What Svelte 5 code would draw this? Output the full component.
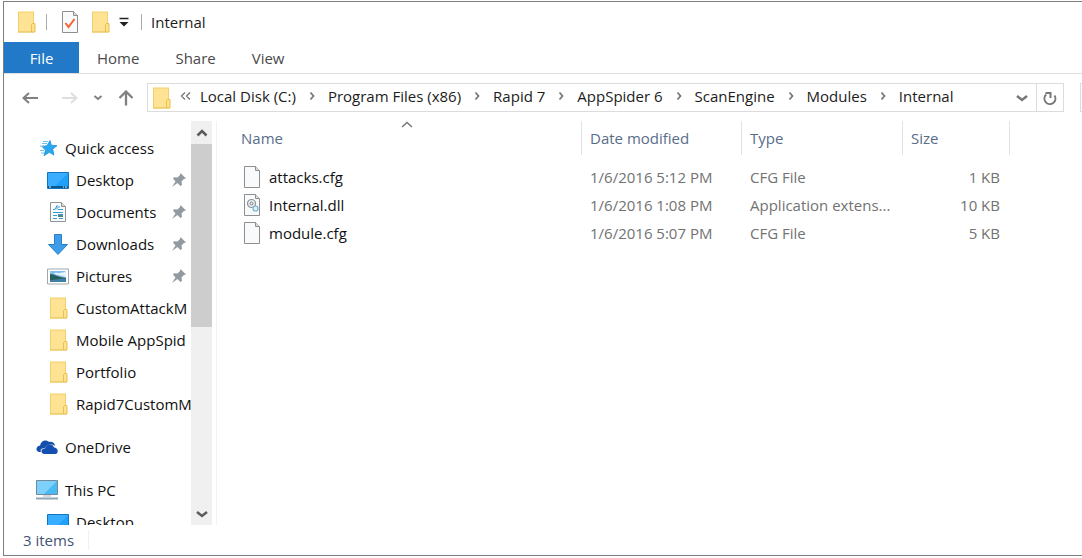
<script>
  const crumbs = ['Local Disk (C:)', 'Program Files (x86)', 'Rapid 7', 'AppSpider 6', 'ScanEngine', 'Modules', 'Internal'];

  const places = [
    { name: 'Quick access', icon: 'star', root: true },
    { name: 'Desktop', icon: 'desktop', pinned: true },
    { name: 'Documents', icon: 'document', pinned: true },
    { name: 'Downloads', icon: 'download', pinned: true },
    { name: 'Pictures', icon: 'picture', pinned: true },
    { name: 'CustomAttackM', icon: 'folder' },
    { name: 'Mobile AppSpid', icon: 'folder' },
    { name: 'Portfolio', icon: 'folder' },
    { name: 'Rapid7CustomM', icon: 'folder' },
    { name: 'OneDrive', icon: 'cloud', root: true },
    { name: 'This PC', icon: 'computer', root: true },
    { name: 'Desktop', icon: 'desktop' }
  ];

  const files = [
    { name: 'attacks.cfg', date: '1/6/2016 5:12 PM', type: 'CFG File', size: '1 KB', icon: 'file' },
    { name: 'Internal.dll', date: '1/6/2016 1:08 PM', type: 'Application extens...', size: '10 KB', icon: 'library' },
    { name: 'module.cfg', date: '1/6/2016 5:07 PM', type: 'CFG File', size: '5 KB', icon: 'file' }
  ];
</script>

{#snippet icon(kind)}
  <svg class="icon" viewBox="0 0 22 22" aria-hidden="true">
    {#if kind === 'folder'}
      <path d="M3 .5h16v21H3z" fill="#f2cf68" />
      <path d="M4 1.500h14v19H4z" fill="#ffe394" />
      <path d="M16.500 21v-7.500l1-1h2.500v8.500z" fill="#ffe28a" stroke="#e9bf4f" />
      <path d="M3 21h13" stroke="#e9c75e" />
    {:else if kind === 'star'}
      <path d="M14 3.500l1.300 4.700 5.700.4-4.300 3.600 1.200 5.800-4.600-2.700-5.300 3.400 1.500-5.700-3.500-3.500 5-.8z" fill="#2ba6ef" stroke="#1b8fd4" stroke-width=".8" />
      <path d="M7 4.500h5M6 6.500h5M4 9h4M4 13.500h4M5 16h3" stroke="#71c2ee" />
    {:else if kind === 'desktop'}
      <path d="M.5 3.500h21v16H.5z" fill="#1fa1fa" stroke="#1276bd" />
      <path d="M1 4h20L8 17H1z" fill="#39adff" />
      <path d="M1 17h20v2H1z" fill="#075b92" />
      <path d="M2 18h2M16 18h1M18 18h2" stroke="#d4efff" />
    {:else if kind === 'document'}
      <path d="M3.500 1.500h11l4 4v15h-15z" fill="#fafbfb" stroke="#909497" />
      <path d="M14.500 1.500v4h4" fill="#ddd" stroke="#909497" />
      <path d="M6 8.500h2l2-4v4M11 6h2M11 8.500h5M6 11.500h10M6 14.500h4M6 17.500h4M12 17.500h4" fill="none" stroke="#389bd2" />
      <path d="M11 13h5v3h-5z" fill="#498fb4" />
      <path d="M11 16l2-2 3 2z" fill="#4a9058" />
    {:else if kind === 'download'}
      <path d="M7.500 1.500h7v10h6L11 21.500 1.500 11.500h6z" fill="#3e9ce8" stroke="#2681c9" />
    {:else if kind === 'picture'}
      <path d="M.5 4h21v15H.5z" fill="#fff" stroke="#a4a7a9" />
      <path d="M3 6h16v11H3z" fill="#83bdec" />
      <path d="M7 9c2-3 4 0 6-1s4 0 6-2v6z" fill="#e7f5fc" />
      <path d="M3 9c5 0 7 3 16 4v4H3z" fill="#285f5b" />
      <path d="M3 15c6 0 9-2 16-1v3H3z" fill="#3d80aa" />
    {:else if kind === 'cloud'}
      <path d="M3 16c-4-1-3-6 1-6.500C5 4.500 10 3 13 6c3-1 6 1 6 4-4-3-9-1-10 2-4 0-5 2-4 4z" fill="#154fa9" />
      <path d="M8 18c-4-1-3-6 1-5.500 1-5 8-5 9-1 4.500 0 5 6.500 1 6.500z" fill="#1450b2" />
    {:else if kind === 'computer'}
      <path d="M.5 1.500h21v14H.5z" fill="#4abaf4" stroke="#70899b" />
      <path d="M1 2h20L8 15H1z" fill="#7dd0fa" />
      <path d="M7 16h8v2H7z" fill="#d3dbe0" />
      <path d="M0 19.500h22" stroke="#8fa5b3" stroke-width="2" />
    {:else}
      <path d="M3.500.5h11l4 4v17h-15z" fill="#f9fafb" stroke="#8d8f90" />
      <path d="M14.500.5v4h4" fill="#dedede" stroke="#8d8f90" />
      {#if kind === 'library'}
        <circle cx="10.500" cy="9.500" r="4" fill="#f1f3f4" stroke="#8b9298" stroke-width="1.200" />
        <circle cx="10.500" cy="9.500" r="1.500" fill="none" stroke="#737b80" />
        <circle cx="14.500" cy="14.500" r="2.500" fill="#d9effa" stroke="#7aafd0" stroke-width="1.200" />
      {:else if kind === 'properties'}
        <path d="M6.500 12l3 4 6-8" fill="none" stroke="#f16535" stroke-width="2" />
      {/if}
    {/if}
  </svg>
{/snippet}

{#snippet glyph(kind)}
  <svg class="glyph" viewBox="0 0 16 16" aria-hidden="true">
    {#if kind === 'back'}
      <path d="M16 8H1M7 3L1.500 8l5.500 5" stroke-width="2" />
    {:else if kind === 'forward'}
      <path d="M0 8h15M9 3l5.500 5L9 13" stroke-width="2" />
    {:else if kind === 'up'}
      <path d="M8 15.500V2M1.500 8L8 1.500 14.500 8" stroke-width="2.300" />
    {:else if kind === 'recent'}
      <path d="M4.500 6L8 9l3.500-3" stroke-width="2" />
    {:else if kind === 'down'}
      <path d="M3 6l5 4 5-4" stroke-width="2.500" />
    {:else if kind === 'scrollup'}
      <path d="M3.500 10.500L8 6l4.500 4.500" stroke-width="2.500" />
    {:else if kind === 'sort'}
      <path d="M3 10l5-4.500 5 4.500" stroke-width="1.500" />
    {:else if kind === 'right'}
      <path d="M6.500 4.500L9.500 8l-3 3.500" stroke-width="1.800" />
    {:else if kind === 'more'}
      <path d="M7 4.500L3.500 8 7 11.500M12 4.500L8.500 8l3.500 3.500" stroke-width="1.300" />
    {:else if kind === 'refresh'}
      <path d="M4.200 4.500a5.500 5.500 0 1 0 8.300 1" stroke-width="2" />
      <path d="M3.500 3h5v5" stroke-width="2" />
    {:else if kind === 'customize'}
      <path d="M3.500 4.500h9" stroke-width="1.500" />
      <path d="M3.500 8h9L8 12.500z" fill="currentColor" stroke="none" />
    {:else if kind === 'pin'}
      <path d="M9.500 1L15 6.500l-2 .5-2.500 2.500.5 3.500-1.500 1-3-3L1 15l3.500-5.500-2.500-3 1-1.200 3.500.2L9 3z" fill="currentColor" stroke="none" />
    {/if}
  </svg>
{/snippet}

<main class="window">
  <header class="titlebar">
    {@render icon('folder')}
    <span class="divider"></span>
    <button class="quick" aria-label="Properties">{@render icon('properties')}</button>
    <button class="quick" aria-label="New folder">{@render icon('folder')}</button>
    <button class="customize" aria-label="Customize toolbar">{@render glyph('customize')}</button>
    <span class="divider"></span>
    <h1>Internal</h1>
  </header>

  <nav class="ribbon" aria-label="Ribbon">
    <button class="file">File</button>
    <button>Home</button>
    <button>Share</button>
    <button>View</button>
  </nav>

  <div class="location">
    <div class="history">
      <button aria-label="Back">{@render glyph('back')}</button>
      <button class="forward" aria-label="Forward" disabled>{@render glyph('forward')}</button>
      <button class="recent" aria-label="Recent locations">{@render glyph('recent')}</button>
      <button aria-label="Up">{@render glyph('up')}</button>
    </div>
    <div class="address">
      {@render icon('folder')}
      <div class="path">
        <button class="more" aria-label="Parent folders">{@render glyph('more')}</button>
        {#each crumbs as crumb, i}
          {#if i > 0}<span class="separator">{@render glyph('right')}</span>{/if}
          <button class="crumb">{crumb}</button>
        {/each}
      </div>
      <button class="previous" aria-label="Previous locations">{@render glyph('down')}</button>
      <button class="refresh" aria-label="Refresh">{@render glyph('refresh')}</button>
    </div>
    <div class="search"></div>
  </div>

  <div class="content">
    <aside>
      <ul class="tree">
        {#each places as place}
          <li class:root={place.root}>
            <button>
              {@render icon(place.icon)}
              <span>{place.name}</span>
            </button>
            {#if place.pinned}<span class="pin">{@render glyph('pin')}</span>{/if}
          </li>
        {/each}
      </ul>
      <div class="scrollbar">
        <button aria-label="Scroll up">{@render glyph('scrollup')}</button>
        <div class="track"><div class="thumb"></div></div>
        <button aria-label="Scroll down">{@render glyph('down')}</button>
      </div>
    </aside>

    <section class="listing">
      <div class="sort">{@render glyph('sort')}</div>
      <table>
        <colgroup>
          <col class="name" /><col class="date" /><col class="type" /><col class="size" />
        </colgroup>
        <thead>
          <tr><th>Name</th><th>Date modified</th><th>Type</th><th>Size</th></tr>
        </thead>
        <tbody>
          {#each files as file}
            <tr>
              <td><span class="filename">{@render icon(file.icon)}{file.name}</span></td>
              <td>{file.date}</td>
              <td>{file.type}</td>
              <td>{file.size}</td>
            </tr>
          {/each}
        </tbody>
      </table>
    </section>
  </div>

  <footer><span>3 items</span></footer>
</main>

<style>
  :global(body) {
    background: #fff;
  }

  * {
    box-sizing: border-box;
  }

  .window {
    display: flex;
    flex-direction: column;
    height: calc(100vh - 3px);
    margin: 1px 0 2px 3px;
    border: 1px solid #7e7e7e;
    border-right: 0;
    overflow: hidden;
    font: 15px/20px "Open Sans", "Noto Sans", sans-serif;
    color: #1c1c1c;
  }

  button {
    display: flex;
    align-items: center;
    justify-content: center;
    padding: 0;
    border: 0;
    background: none;
    font: inherit;
    color: inherit;
    white-space: nowrap;
  }

  .icon {
    display: block;
    flex: none;
    width: 22px;
    height: 22px;
  }

  .glyph {
    display: block;
    flex: none;
    width: 16px;
    height: 16px;
    fill: none;
    stroke: currentColor;
  }

  .titlebar {
    display: flex;
    flex: none;
    align-items: center;
    height: 40px;
    padding-left: 11px;
  }

  .divider {
    width: 1px;
    height: 16px;
    margin: 0 9px;
    background: #ababab;
  }

  .quick {
    margin: 0 5px 0 3px;
  }

  .customize {
    color: #222;
  }

  h1 {
    margin: 0;
    font: inherit;
  }

  .ribbon {
    display: flex;
    flex: none;
    height: 32px;
    border-bottom: 1px solid #dedfe0;
    color: #4a4a4a;
  }

  .ribbon button {
    padding: 0 18px;
  }

  .ribbon .file {
    width: 75px;
    background: #2179c7;
    color: #fff;
  }

  .location {
    display: flex;
    flex: none;
    height: 46px;
    padding: 9px 0 8px;
  }

  .history {
    display: flex;
    flex: none;
    align-items: center;
    gap: 24px;
    width: 143px;
    padding-left: 18px;
    color: #808080;
  }

  .forward {
    color: #dedede;
  }

  .recent {
    margin: 0 -16px;
    padding: 0 4px;
  }

  .address {
    display: flex;
    flex: 1;
    min-width: 0;
    align-items: center;
    border: 1px solid #dcdcdc;
    padding-left: 2px;
  }

  .path {
    display: flex;
    align-items: center;
    padding-bottom: 4px;
  }

  .more {
    width: 28px;
    color: #777;
  }

  .separator {
    display: flex;
    flex: none;
    justify-content: center;
    width: 32px;
    color: #777;
  }

  .previous {
    width: 29px;
    margin-left: auto;
    color: #777;
  }

  .refresh {
    align-self: stretch;
    width: 27px;
    border-left: 1px solid #dcdcdc;
    color: #777;
  }

  .search {
    width: 2px;
    margin-left: 16px;
    border: 1px solid #dcdcdc;
    border-right: 0;
  }

  .content {
    display: flex;
    flex: 1;
    min-height: 0;
  }

  aside {
    display: flex;
    flex: none;
    width: 213px;
    margin-top: 1px;
    border-right: 1px solid #f2f2f2;
  }

  .tree {
    flex: 1;
    min-width: 0;
    margin: 0;
    padding: 11px 0 0;
    overflow: hidden;
    list-style: none;
    color: #111;
  }

  li {
    display: flex;
    align-items: center;
    height: 32px;
    padding-left: 43px;
  }

  li button {
    gap: 7px;
  }

  .root {
    padding-left: 32px;
  }

  .root:not(:first-child) {
    height: 43px;
    padding-top: 10px;
  }

  .pin {
    margin-left: auto;
    padding-right: 4px;
    color: #939ba1;
  }

  .scrollbar {
    display: flex;
    flex: none;
    flex-direction: column;
    width: 21px;
    margin-right: 4px;
    background: #f0f0f0;
    color: #5b5b5b;
  }

  .scrollbar button {
    width: 100%;
    height: 23px;
  }

  .track {
    flex: 1;
  }

  .thumb {
    height: 51%;
    background: #cdcdcd;
  }

  .listing {
    position: relative;
    flex: 1;
    min-width: 0;
    margin-top: 1px;
  }

  .sort {
    position: absolute;
    top: -4px;
    left: 182px;
    color: #777;
  }

  table {
    width: 793px;
    table-layout: fixed;
    border-collapse: separate;
    border-spacing: 0;
  }

  .name {
    width: 365px;
  }

  .date {
    width: 160px;
  }

  .type {
    width: 161px;
  }

  th,
  td {
    padding: 0 4px 0 8px;
    text-align: left;
    white-space: nowrap;
  }

  th {
    height: 34px;
    border-right: 1px solid #e2e2e2;
    font-weight: 400;
    color: #596d89;
  }

  th:first-child,
  td:first-child {
    padding-left: 24px;
  }

  td {
    height: 28px;
    color: #727272;
  }

  td:last-child {
    text-align: right;
    padding-right: 10px;
  }

  tbody::before {
    display: block;
    height: 8px;
    content: "";
  }

  .filename {
    display: flex;
    align-items: center;
    gap: 6px;
    color: #111;
  }

  footer {
    display: flex;
    flex: none;
    align-items: center;
    height: 30px;
    padding-left: 19px;
    color: #405372;
  }

  footer span {
    padding-right: 14px;
    border-right: 1px solid #f0f0f0;
  }
</style>
